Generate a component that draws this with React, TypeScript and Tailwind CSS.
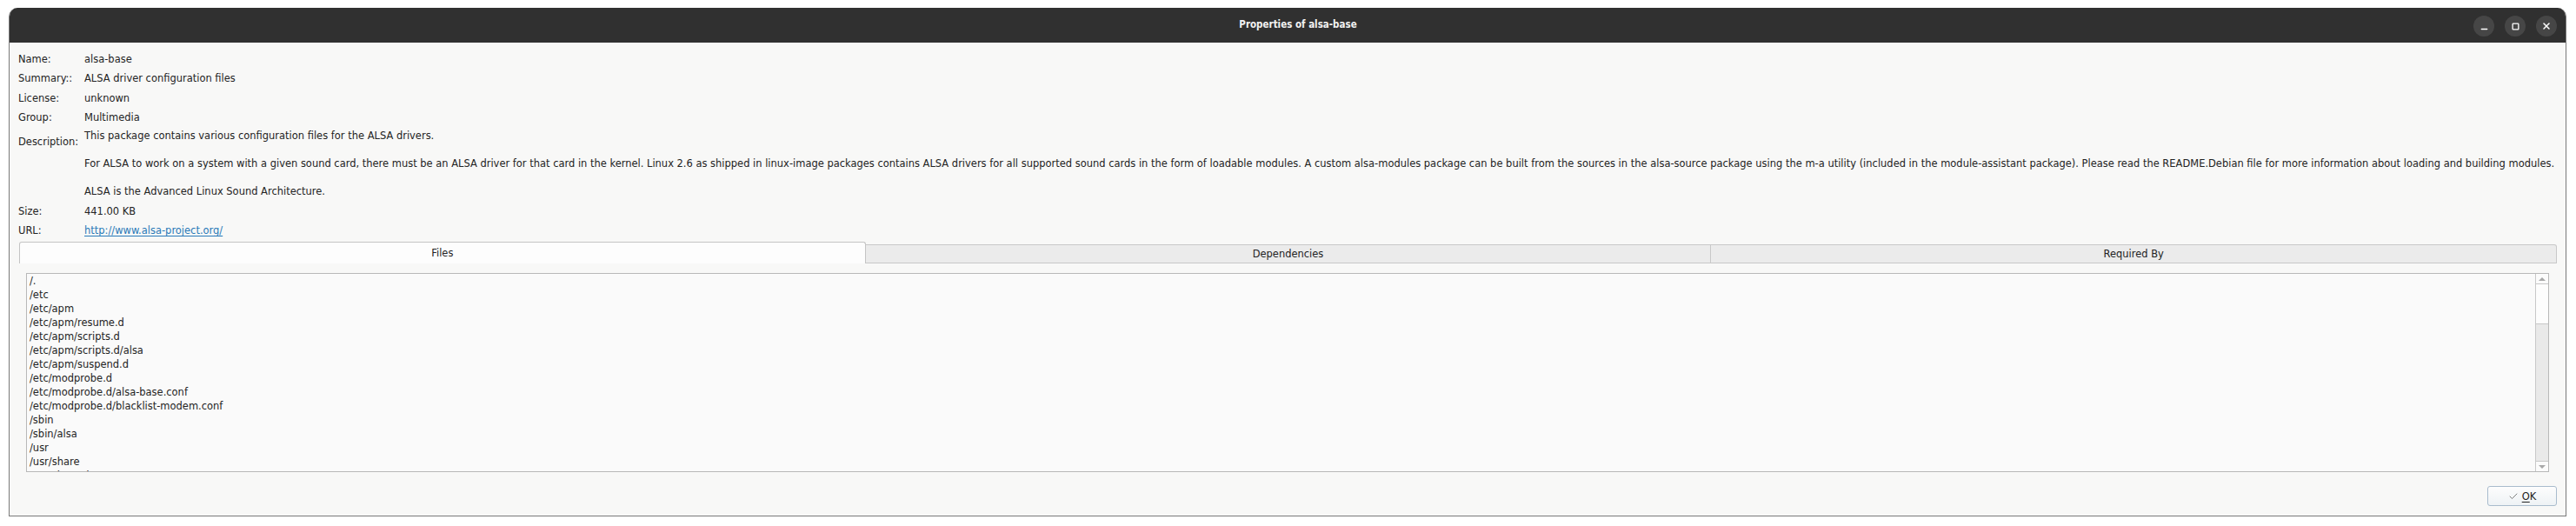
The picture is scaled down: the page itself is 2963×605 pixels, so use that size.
import { Check, Minus, Square, X } from "lucide-react";

const files = [
  "/.",
  "/etc",
  "/etc/apm",
  "/etc/apm/resume.d",
  "/etc/apm/scripts.d",
  "/etc/apm/scripts.d/alsa",
  "/etc/apm/suspend.d",
  "/etc/modprobe.d",
  "/etc/modprobe.d/alsa-base.conf",
  "/etc/modprobe.d/blacklist-modem.conf",
  "/sbin",
  "/sbin/alsa",
  "/usr",
  "/usr/share",
  "/usr/share/doc",
];

const tabs = ["Files", "Dependencies", "Required By"];

const font = "font-['DejaVu_Sans_Condensed','DejaVu_Sans',sans-serif]";

function Row({ label, children }: { label: string; children: React.ReactNode }) {
  return (
    <div className="flex h-[22.5px] items-center">
      <div className="w-[76px] shrink-0">{label}</div>
      <div className="min-w-0">{children}</div>
    </div>
  );
}

function TitleButton({ children }: { children: React.ReactNode }) {
  return (
    <div className="flex h-[24px] w-[24px] items-center justify-center rounded-full bg-[#464646] text-white">
      {children}
    </div>
  );
}

export default function App() {
  return (
    <div className={`h-[605px] w-[2963px] bg-white pl-[10px] pt-[9px] ${font}`}>
      <div className="flex h-[585px] w-[2942px] flex-col overflow-hidden rounded-t-[10px] border border-t-0 border-[#7a7a7a] bg-[#f8f8f7]">
        <header className="relative flex h-[40px] shrink-0 items-center justify-center bg-[#303030]">
          <span className="ml-[24px] text-[11.5px] font-bold text-[#f2f2f2]">Properties of alsa-base</span>
          <div className="absolute right-[10px] top-[9px] flex gap-[12px]">
            <TitleButton>
              <Minus size={11} strokeWidth={3} className="mt-[6px]" />
            </TitleButton>
            <TitleButton>
              <Square size={9} strokeWidth={3.5} />
            </TitleButton>
            <TitleButton>
              <X size={12} strokeWidth={3} />
            </TitleButton>
          </div>
        </header>

        <div className="flex flex-1 flex-col pl-[10px] pr-[10px] pt-[7px] text-[12.75px] text-[#232323]">
          <Row label="Name:">alsa-base</Row>
          <Row label="Summary::">ALSA driver configuration files</Row>
          <Row label="License:">unknown</Row>
          <Row label="Group:">Multimedia</Row>

          <div className="flex h-[85px]">
            <div className="w-[76px] shrink-0 pt-[9px] leading-[16px]">Description:</div>
            <div className="flex flex-col gap-[16px] whitespace-nowrap pt-[2px] leading-[16px]">
              <p>This package contains various configuration files for the ALSA drivers.</p>
              <p>
                For ALSA to work on a system with a given sound card, there must be an ALSA driver for that card in
                the kernel. Linux 2.6 as shipped in linux-image packages contains ALSA drivers for all supported
                sound cards in the form of loadable modules. A custom alsa-modules package can be built from the
                sources in the alsa-source package using the m-a utility (included in the module-assistant
                package). Please read the README.Debian file for more information about loading and building
                modules.
              </p>
              <p>ALSA is the Advanced Linux Sound Architecture.</p>
            </div>
          </div>

          <Row label="Size:">441.00 KB</Row>
          <Row label="URL:">
            <span className="text-[#2a7ab8] underline underline-offset-2">http://www.alsa-project.org/</span>
          </Row>

          <div className="ml-[1px] mt-[2px] flex h-[25px] items-end">
            {tabs.map((tab, i) => (
              <div
                key={tab}
                className={
                  i === 0
                    ? "flex h-[25px] flex-1 items-center justify-center rounded-t-[3px] border border-b-0 border-[#c4c4c4] bg-[#fdfdfd]"
                    : "flex h-[22px] flex-1 items-center justify-center border border-l-0 border-[#c8c8c8] bg-[#ebebeb] last:rounded-tr-[3px]"
                }
              >
                {tab}
              </div>
            ))}
          </div>

          <div className="ml-[9px] mr-[9px] mt-[11px] flex h-[229px] border border-[#b8b8b8] bg-[#fafafa]">
            <div className="flex-1 overflow-hidden pl-[3px] leading-[16px]">
              {files.map((f) => (
                <div key={f} className="h-[16px]">
                  {f}
                </div>
              ))}
            </div>
            <div className="flex w-[15px] flex-col border-l border-[#c8c8c8] bg-[#e9e9e9]">
              <div className="flex h-[12px] items-center justify-center border-b border-[#c8c8c8] bg-[#fbfbfb]">
                <div className="h-0 w-0 border-x-[4px] border-b-[4px] border-x-transparent border-b-[#a8a8a8]" />
              </div>
              <div className="h-[46px] border-b border-[#c8c8c8] bg-[#fdfdfd]" />
              <div className="flex-1" />
              <div className="flex h-[12px] items-center justify-center border-t border-[#c8c8c8] bg-[#fbfbfb]">
                <div className="h-0 w-0 border-x-[4px] border-t-[4px] border-x-transparent border-t-[#a8a8a8]" />
              </div>
            </div>
          </div>

          <div className="mt-[16px] flex justify-end">
            <button className="flex h-[23px] w-[80px] items-center justify-center gap-[4px] rounded-[3px] border border-[#a9bccd] bg-gradient-to-b from-[#fdfdfd] to-[#eef2f5] text-[12.75px] text-[#232323]">
              <Check size={12} strokeWidth={1.5} className="text-[#555]" />
              <span>
                <span className="underline underline-offset-2">O</span>K
              </span>
            </button>
          </div>
        </div>
      </div>
    </div>
  );
}
